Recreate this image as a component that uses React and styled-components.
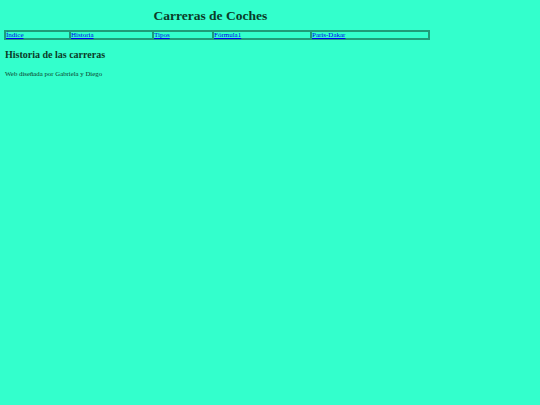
import React from "react";
import styled, { createGlobalStyle } from "styled-components";

const GlobalStyle = createGlobalStyle`
  html, body {
    margin: 0;
    background: #33ffcc;
  }
  body {
    padding: 4px;
    font-family: "Liberation Serif", "Times New Roman", serif;
    color: #0b3b28;
  }
`;

const Page = styled.div`
  display: flex;
  flex-direction: column;
`;

const Title = styled.h1`
  width: 80%;
  box-sizing: border-box;
  margin: 4px 0 6px 0;
  padding-right: 13px;
  text-align: center;
  font-size: 13.5px;
  font-weight: bold;
  line-height: 16px;
`;

const Menu = styled.div`
  display: flex;
  width: 80%;
  border: 1px solid #1f9c78;
  box-sizing: border-box;
`;

const Cell = styled.div`
  width: ${({ $w }) => $w}px;
  flex: none;
  border: 1px solid #1f9c78;
  box-sizing: border-box;
  height: 8px;
  padding-left: 0;
  font-size: 7px;
  line-height: 7px;
  white-space: nowrap;
  &:last-child {
    flex: 1;
  }
`;

const Link = styled.a`
  color: #0000ee;
  text-decoration: underline;
`;

const Heading = styled.h2`
  margin: 9px 0 0 1px;
  font-size: 10px;
  font-weight: bold;
  line-height: 12px;
`;

const Footer = styled.p`
  margin: 9px 0 0 1px;
  font-size: 6.8px;
  line-height: 8px;
`;

const links = [
  { label: "Índice", w: 65 },
  { label: "Historia", w: 83 },
  { label: "Tipos", w: 60 },
  { label: "Fórmula1", w: 98 },
  { label: "París-Dakar", w: 119 },
];

export default function App() {
  return (
    <Page>
      <GlobalStyle />
      <Title>Carreras de Coches</Title>
      <Menu>
        {links.map((l) => (
          <Cell key={l.label} $w={l.w}>
            <Link href="#">{l.label}</Link>
          </Cell>
        ))}
      </Menu>
      <Heading>Historia de las carreras</Heading>
      <Footer>Web diseñada por Gabriela y Diego</Footer>
    </Page>
  );
}
